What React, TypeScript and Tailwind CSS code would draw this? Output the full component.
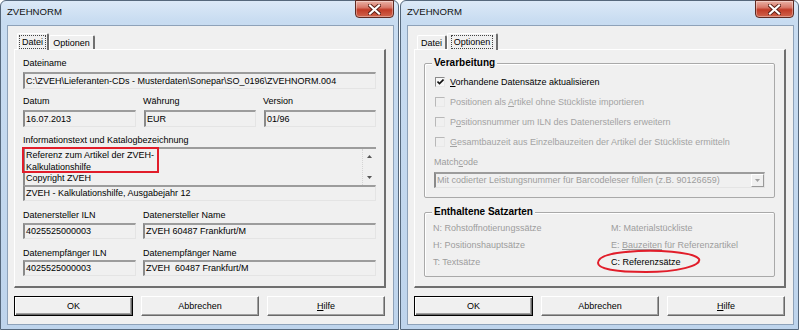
import React from "react";

const sunken =
  "border-t-2 border-l-2 border-r border-b border-t-[#9c9c9c] border-l-[#8a8a8a] border-r-[#e4e4e4] border-b-[#e4e4e4]";

function CloseButton() {
  return (
    <div className="-mt-[1px] mr-[4px] w-[39px] h-[18px] rounded-b-[4px] border border-[#5e2a22] bg-[linear-gradient(180deg,#eab2a6_0%,#d8796a_40%,#c13b27_55%,#d0644c_100%)] flex items-center justify-center shadow-[inset_0_0_0_1px_rgba(255,255,255,0.35)]">
      <svg width="13" height="11" viewBox="0 0 13 11">
        <path d="M2 1.5 L11 9.5 M11 1.5 L2 9.5" stroke="#5a1f16" strokeWidth="4" strokeLinecap="square" />
        <path d="M2 1.5 L11 9.5 M11 1.5 L2 9.5" stroke="#ffffff" strokeWidth="2.2" strokeLinecap="square" />
      </svg>
    </div>
  );
}

function Tab({ label, selected, w }: { label: string; selected?: boolean; w: string }) {
  if (selected) {
    return (
      <div className={`${w} h-[17px] relative z-10 bg-[#f0f0f0] border-t border-l border-white border-r-2 border-r-[#6f6f6f] rounded-t-[2px] flex items-center justify-center`}>
        <span className="px-[2px] leading-[12px] border border-dotted border-[#444]">{label}</span>
      </div>
    );
  }
  return (
    <div className={`${w} h-[15px] border-t border-l border-white border-r-2 border-r-[#6f6f6f] rounded-t-[2px] flex items-center justify-center`}>
      <span className="leading-[12px]">{label}</span>
    </div>
  );
}

function Button({ children, primary }: { children: React.ReactNode; primary?: boolean }) {
  const frame = primary
    ? "border border-black shadow-[inset_1px_1px_0_#ffffff,inset_-1px_-1px_0_#696969,inset_-2px_-2px_0_#a0a0a0]"
    : "border border-t-white border-l-white border-r-[#696969] border-b-[#696969] shadow-[inset_-1px_-1px_0_#a0a0a0]";
  return <div className={`h-[20px] flex items-center justify-center ${frame}`}>{children}</div>;
}

function Dialog({ tab, children }: { tab: 0 | 1; children: React.ReactNode }) {
  return (
    <div className="w-[399px] h-[330px] shrink-0 flex flex-col rounded-t-[6px] border border-[#56687c] bg-[linear-gradient(180deg,#dce9f7_0px,#c8dcf1_20px,#bed4ec_100%)]">
      <div className="h-[24px] flex items-start justify-between">
        <span className="pl-[6px] pt-[4px] text-[9.6px] leading-[14px] text-[#111]">ZVEHNORM</span>
        <CloseButton />
      </div>
      <div className="ml-[6px] mr-[4px] h-[300px] border border-[#8ea2b9] bg-[#f0f0f0] px-[6px] pt-[7px]">
        <div className="flex items-end pl-[3px] h-[17px]">
          {tab === 0 ? (
            <>
              <Tab label="Datei" selected w="w-[32px]" />
              <Tab label="Optionen" w="w-[46px]" />
            </>
          ) : (
            <>
              <Tab label="Datei" w="w-[30px]" />
              <Tab label="Optionen" selected w="w-[51px]" />
            </>
          )}
        </div>
        <div className="-mt-[1px] w-[372px] h-[239px] relative border-t border-l border-white border-r-2 border-b-2 border-r-[#6f6f6f] border-b-[#6f6f6f]">
          {children}
        </div>
        <div className="mt-[8px] flex gap-[8px]">
          <div className="w-[119px]">
            <Button primary>OK</Button>
          </div>
          <div className="w-[118px]">
            <Button>Abbrechen</Button>
          </div>
          <div className="w-[118px]">
            <Button>
              <span>
                <u>H</u>ilfe
              </span>
            </Button>
          </div>
        </div>
      </div>
    </div>
  );
}

function Field({ w, h, children }: { w: string; h: string; children?: React.ReactNode }) {
  return (
    <div className={`${w} ${h} ${sunken} flex items-center pl-[1px] whitespace-nowrap overflow-hidden`}>
      {children}
    </div>
  );
}

function DateiPanel() {
  return (
    <div className="pl-[8px] pt-[7px]">
      <div className="h-[13px] leading-[13px]">Dateiname</div>
      <div className="mt-[2px]">
        <Field w="w-[353px]" h="h-[17px]">
          C:\ZVEH\Lieferanten-CDs - Musterdaten\Sonepar\SO_0196\ZVEHNORM.004
        </Field>
      </div>
      <div className="mt-[6px] flex gap-[8px] h-[13px] leading-[13px]">
        <div className="w-[112px]">Datum</div>
        <div className="w-[112px]">Währung</div>
        <div className="w-[112px]">Version</div>
      </div>
      <div className="mt-[2px] flex gap-[8px]">
        <Field w="w-[113px]" h="h-[17px]">16.07.2013</Field>
        <Field w="w-[112px]" h="h-[17px]">EUR</Field>
        <Field w="w-[112px]" h="h-[17px]">01/96</Field>
      </div>
      <div className="mt-[7px] h-[13px] leading-[13px]">Informationstext und Katalogbezeichnung</div>
      <div className="w-[353px] h-[38px] border-t-2 border-l-2 border-t-[#9c9c9c] border-l-[#8a8a8a] flex">
        <div className="flex-1 pl-[1px] pt-[1px] leading-[11.5px] overflow-hidden">
          <div>Referenz zum Artikel der ZVEH-</div>
          <div>Kalkulationshilfe</div>
          <div>Copyright ZVEH</div>
        </div>
        <div className="w-[13px] mr-[1px] border-l border-dotted border-[#d4d4d4] flex flex-col items-center justify-between pt-[6px] pb-[6px]">
          <svg width="5" height="3" viewBox="0 0 5 3">
            <path d="M0 3 L2.5 0 L5 3 Z" fill="#555" />
          </svg>
          <svg width="5" height="3" viewBox="0 0 5 3">
            <path d="M0 0 L2.5 3 L5 0 Z" fill="#555" />
          </svg>
        </div>
      </div>
      <Field w="w-[353px]" h="h-[16px]">ZVEH - Kalkulationshilfe, Ausgabejahr 12</Field>
      <div className="mt-[8px] flex gap-[8px] h-[13px] leading-[13px]">
        <div className="w-[112px]">Datenersteller ILN</div>
        <div>Datenersteller Name</div>
      </div>
      <div className="mt-[1px] flex gap-[7px]">
        <Field w="w-[113px]" h="h-[16px]">4025525000003</Field>
        <Field w="w-[233px]" h="h-[16px]">ZVEH 60487 Frankfurt/M</Field>
      </div>
      <div className="mt-[8px] flex gap-[8px] h-[13px] leading-[13px]">
        <div className="w-[112px]">Datenempfänger ILN</div>
        <div>Datenempfänger Name</div>
      </div>
      <div className="flex gap-[7px]">
        <Field w="w-[113px]" h="h-[16px]">4025525000003</Field>
        <Field w="w-[233px]" h="h-[16px]">
          <span className="whitespace-pre">ZVEH  60487 Frankfurt/M</span>
        </Field>
      </div>
      <div className="absolute left-[7px] top-[97px] w-[137px] h-[26px] border-2 border-[#e11d2a]" />
    </div>
  );
}

function Check({ checked, disabled, children }: { checked?: boolean; disabled?: boolean; children: React.ReactNode }) {
  return (
    <div className={`h-[20px] flex items-center gap-[5px] pl-[1px] ${disabled ? "text-[#a3a3a3]" : ""}`}>
      <div
        className={`w-[10px] h-[10px] border-t border-l border-r border-b border-t-[#8a8a8a] border-l-[#8a8a8a] border-r-[#e8e8e8] border-b-[#e8e8e8] flex items-center justify-center ${
          disabled ? "bg-[#f0f0f0] border-t-[#b8b8b8] border-l-[#b8b8b8]" : "bg-[#f7f7f7]"
        }`}
      >
        {checked && (
          <svg width="7" height="6" viewBox="0 0 7 6">
            <path d="M0.5 2.5 L2.5 4.5 L6.5 0.5" stroke="#111" strokeWidth="1.6" fill="none" />
          </svg>
        )}
      </div>
      <span className="whitespace-nowrap">{children}</span>
    </div>
  );
}

function OptionenPanel() {
  const gray = "text-[#9d9d9d]";
  return (
    <div className="pl-[9px] pt-[13px]">
      <div className="relative w-[351px] h-[135px] border border-[#a9a9a9] rounded-[2px] shadow-[inset_1px_1px_0_#ffffff] pl-[9px] pt-[8px]">
        <span className="absolute -top-[8px] left-[7px] px-[2px] bg-[#f0f0f0] text-[10px] font-bold leading-[14px]">
          Verarbeitung
        </span>
        <Check checked>
          <u>V</u>orhandene Datensätze aktualisieren
        </Check>
        <Check disabled>
          Positionen als <u>A</u>rtikel ohne Stückliste importieren
        </Check>
        <Check disabled>
          P<u>o</u>sitionsnummer um ILN des Datenerstellers erweitern
        </Check>
        <Check disabled>
          <u>G</u>esamtbauzeit aus Einzelbauzeiten der Artikel der Stückliste ermitteln
        </Check>
        <div className={`mt-[4px] h-[13px] leading-[13px] ${gray}`}>
          Match<u>c</u>ode
        </div>
        <div className={`mt-[3px] w-[331px] h-[16px] ${sunken} flex items-center`}>
          <span className={`flex-1 pl-[1px] whitespace-nowrap ${gray}`}>
            Mit codierter Leistungsnummer für Barcodeleser füllen (z.B. 90126659)
          </span>
          <div className="w-[13px] h-full border-l border-t border-white border-r border-b border-r-[#9a9a9a] border-b-[#9a9a9a] flex items-center justify-center">
            <svg width="5" height="3" viewBox="0 0 5 3">
              <path d="M0 0 L2.5 3 L5 0 Z" fill="#a0a0a0" />
            </svg>
          </div>
        </div>
      </div>
      <div className="relative mt-[14px] w-[351px] h-[65px] border border-[#a9a9a9] rounded-[2px] shadow-[inset_1px_1px_0_#ffffff] pl-[8px] pt-[7px]">
        <span className="absolute -top-[8px] left-[7px] px-[2px] bg-[#f0f0f0] text-[10px] font-bold leading-[14px]">
          Enthaltene Satzarten
        </span>
        <div className="grid grid-cols-[178px_1fr] leading-[17px]">
          <div className={gray}>N: Rohstoffnotierungssätze</div>
          <div className={gray}>M: Materialstückliste</div>
          <div className={gray}>H: Positionshauptsätze</div>
          <div className={gray}>
            E: <u>Bauzeiten</u> für Referenzartikel
          </div>
          <div className={gray}>T: Textsätze</div>
          <div>C: Referenzsätze</div>
        </div>
      </div>
      <svg className="absolute left-[181px] top-[199px]" width="106" height="26" viewBox="0 0 106 26">
        <path
          d="M30 3 C60 0 98 3 103 10 C106 17 80 23 50 23 C20 23 2 20 2 14 C2 8 14 4 34 2.5"
          fill="none"
          stroke="#e11d2a"
          strokeWidth="2"
        />
      </svg>
    </div>
  );
}

export default function App() {
  return (
    <div className="w-[800px] h-[330px] overflow-hidden bg-white flex gap-[1px] font-['Liberation_Sans',Arial,sans-serif] text-[9px] leading-[13px] text-black">
      <Dialog tab={0}>
        <DateiPanel />
      </Dialog>
      <Dialog tab={1}>
        <OptionenPanel />
      </Dialog>
    </div>
  );
}
